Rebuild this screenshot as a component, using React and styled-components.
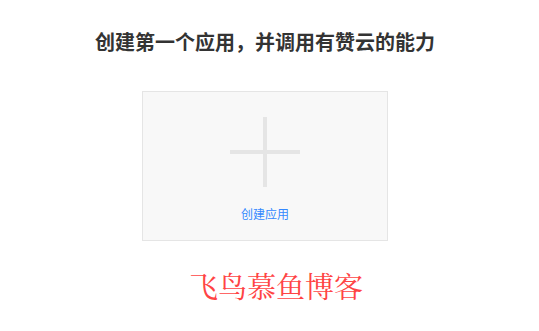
import React from "react";
import styled, { createGlobalStyle } from "styled-components";

const Global = createGlobalStyle`
  html, body { margin: 0; padding: 0; background: #fff; }
  body { font-family: "Noto Sans CJK SC", "Noto Sans", sans-serif; }
`;

const Page = styled.div`
  width: 530px;
  display: flex;
  flex-direction: column;
  align-items: center;
  padding-top: 30px;
`;

const Title = styled.h2`
  margin: 0;
  font-size: 20px;
  line-height: 24px;
  font-weight: 700;
  color: #333;
  font-family: "Noto Sans CJK SC", sans-serif;
`;

const CreateCard = styled.div`
  margin-top: 37px;
  width: 244px;
  height: 148px;
  border: 1px solid #e5e5e5;
  background: #f8f8f8;
  display: flex;
  flex-direction: column;
  align-items: center;
  cursor: pointer;
`;

const Plus = styled.div`
  margin-top: 25px;
  width: 70px;
  height: 70px;
  position: relative;
  &::before, &::after {
    content: "";
    position: absolute;
    background: #e5e5e5;
  }
  &::before { left: 33px; top: 0; width: 4px; height: 70px; }
  &::after { top: 33px; left: 0; height: 4px; width: 70px; }
`;

const CardLabel = styled.span`
  margin-top: 19px;
  font-size: 12px;
  line-height: 16px;
  color: #38f;
  font-family: "Noto Sans CJK SC", sans-serif;
`;

const Brand = styled.div`
  margin-top: 30px;
  padding-left: 22px;
  font-size: 29px;
  line-height: 34px;
  color: #f44;
  font-family: "Liberation Serif", "Noto Serif CJK SC", serif;
`;

export default function App() {
  return (
    <>
      <Global />
      <Page>
        <Title>创建第一个应用，并调用有赞云的能力</Title>
        <CreateCard>
          <Plus />
          <CardLabel>创建应用</CardLabel>
        </CreateCard>
        <Brand>飞鸟慕鱼博客</Brand>
      </Page>
    </>
  );
}
